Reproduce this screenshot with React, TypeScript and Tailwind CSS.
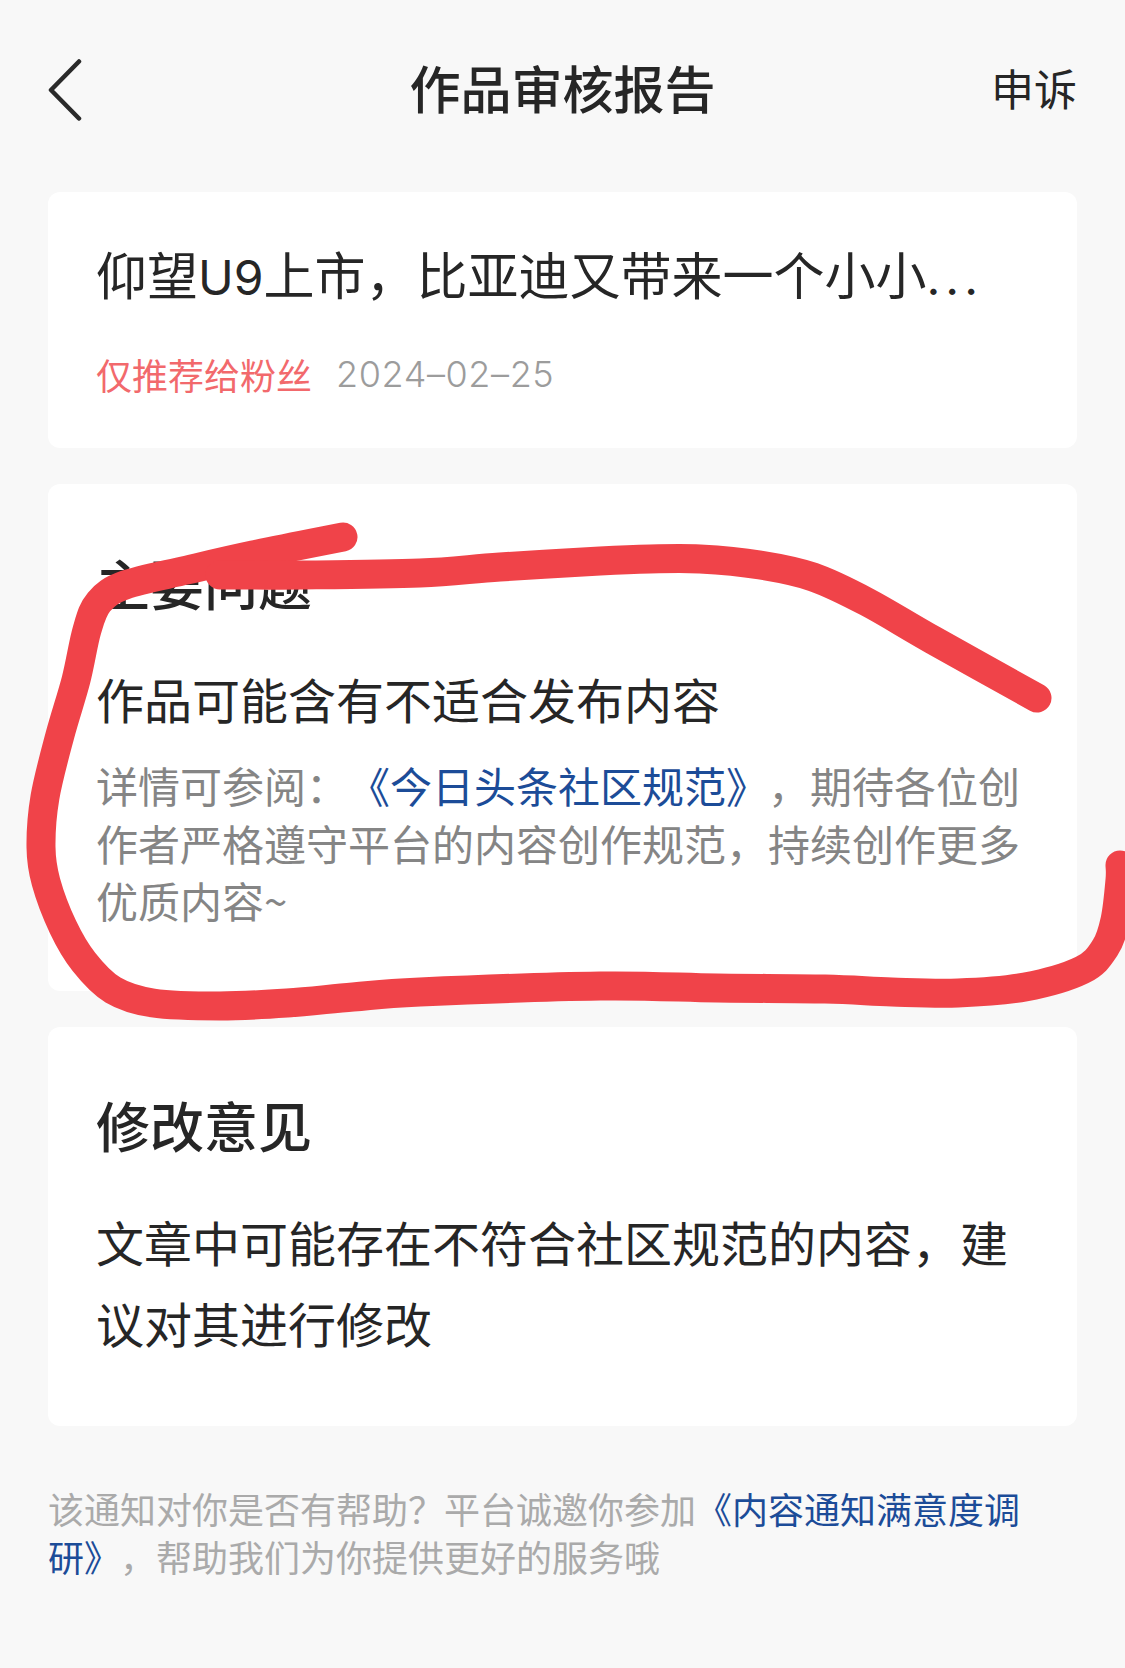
const FONT = "font-['Noto_Sans_CJK_SC','Noto_Sans',sans-serif]";

const cornerPts: [number, number][] = [
  [343, 537], [253, 555], [187, 570], [125, 585], [99, 602], [87, 630], [76, 680], [60, 735], [45, 797], [41, 847], [46, 882], [63, 927], [84, 962], [113, 990], [153, 1003], [220, 1006], [287, 1003], [353, 997], [420, 992], [600, 986], [717, 988], [825, 989], [892, 992], [958, 993], [1025, 987], [1082, 970], [1105, 948], [1115, 920], [1120, 880], [1120, 865],
];
const topPts: [number, number][] = [
  [1037, 698], [933, 640], [867, 602], [813, 577], [760, 565], [700, 559], [650, 559], [600, 561], [500, 567], [420, 573], [303, 575], [220, 575],
];

function smooth(p: [number, number][]) {
  let d = `M${p[0][0]} ${p[0][1]}`;
  for (let i = 0; i < p.length - 1; i++) {
    const a = p[Math.max(i - 1, 0)], b = p[i], c = p[i + 1], e = p[Math.min(i + 2, p.length - 1)];
    d += ` C${b[0] + (c[0] - a[0]) / 6} ${b[1] + (c[1] - a[1]) / 6} ${c[0] - (e[0] - b[0]) / 6} ${c[1] - (e[1] - b[1]) / 6} ${c[0]} ${c[1]}`;
  }
  return d;
}

export default function App() {
  return (
    <div className={`relative w-[1125px] h-[1668px] overflow-hidden bg-[#f8f8f8] text-[#262626] [text-spacing-trim:space-all] ${FONT}`}>
      <header className="h-[192px] pb-[18px] px-[48px] grid grid-cols-[1fr_auto_1fr] items-center">
        <svg className="mt-[5px]" width="34" height="62" viewBox="0 0 34 62" fill="none" stroke="#2a2a2a" strokeWidth="4.5" strokeLinecap="round" strokeLinejoin="round">
          <path d="M31 2.5 L3 31 L31 59.5" />
        </svg>
        <h1 className="text-[51px] leading-[60px] font-medium">作品审核报告</h1>
        <div className="justify-self-end text-[43px] leading-[50px]">申诉</div>
      </header>

      <main className="px-[48px] flex flex-col gap-[36px]">
        <section className="h-[256px] rounded-[12px] bg-white px-[48px] pt-[41px]">
          <div className="text-[51px] leading-[80px] whitespace-nowrap">
            仰望<span className="font-['Inter'] text-[48px]">U9</span>上市，比亚迪又带来一个小小<span className="font-['Inter'] text-[48px] tracking-[5px]">...</span>
          </div>
          <div className="mt-[32px] flex items-center gap-[24px] text-[36px] leading-[48px] whitespace-nowrap">
            <span className="text-[#f2696c]">仅推荐给粉丝</span>
            <span className="font-['Inter'] text-[36px] tracking-[0.6px] font-light text-[#9c9c9c]">2024–02–25</span>
          </div>
        </section>

        <section className="h-[507px] rounded-[12px] bg-white px-[48px] pt-[63px]">
          <h2 className="text-[54px] leading-[72px] font-medium">主要问题</h2>
          <div className="mt-[39px] text-[48px] leading-[80px] whitespace-nowrap">作品可能含有不适合发布内容</div>
          <p className="mt-[18px] text-[42px] leading-[57.5px] text-[#858585] whitespace-nowrap">
            详情可参阅：<span className="text-[#1c4c98]">《今日头条社区规范》</span>，期待各位创<br />
            作者严格遵守平台的内容创作规范，持续创作更多<br />
            优质内容~
          </p>
        </section>

        <section className="h-[399px] rounded-[12px] bg-white px-[48px] pt-[62px]">
          <h2 className="text-[54px] leading-[72px] font-medium">修改意见</h2>
          <p className="mt-[40px] text-[48px] leading-[81px] whitespace-nowrap">
            文章中可能存在不符合社区规范的内容，建<br />
            议对其进行修改
          </p>
        </section>

        <footer className="mt-[23px] text-[36px] leading-[47.5px] text-[#aaaaaa] whitespace-nowrap">
          该通知对你是否有帮助？平台诚邀你参加<span className="text-[#1c4c98]">《内容通知满意度调<br />研》</span>，帮助我们为你提供更好的服务哦
        </footer>
      </main>

      <svg className="absolute inset-0 pointer-events-none" width="1125" height="1668" viewBox="0 0 1125 1668" fill="none" stroke="#f04349" strokeWidth="29" strokeLinecap="round" strokeLinejoin="round">
        <path d={smooth(cornerPts)} />
        <path d={smooth(topPts)} />
      </svg>
    </div>
  );
}
